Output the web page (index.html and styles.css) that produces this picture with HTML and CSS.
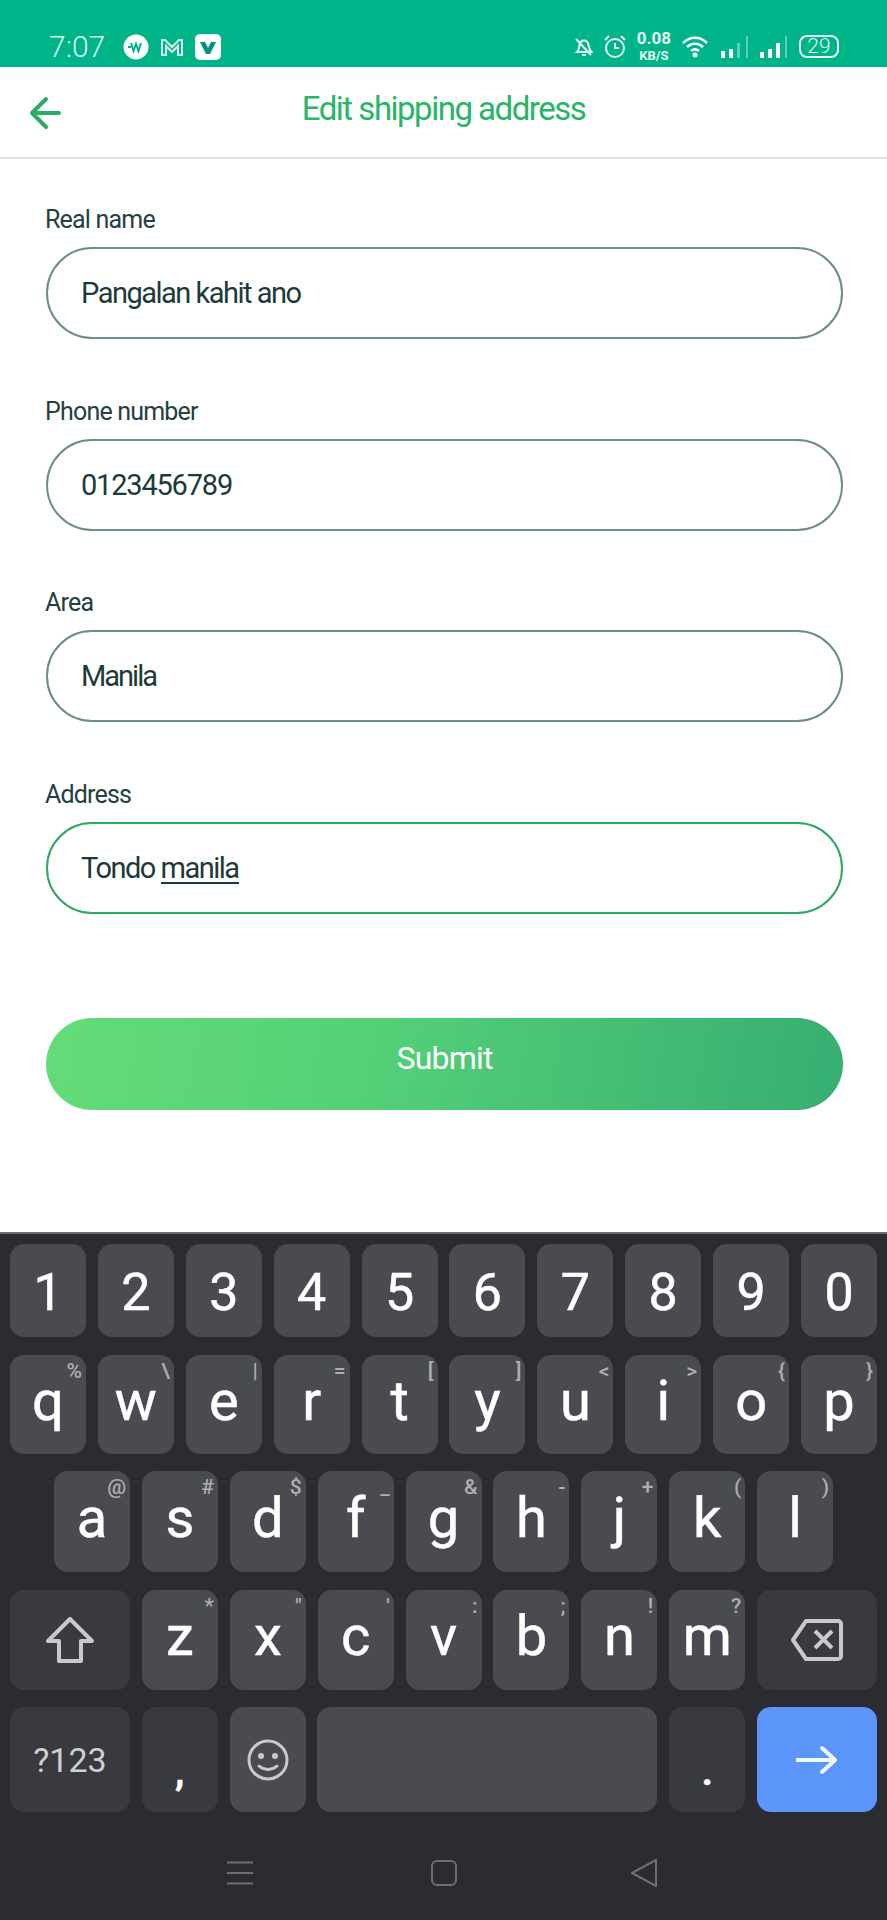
FILE: index.html
```html
<!DOCTYPE html>
<html lang="en">
<head>
    <meta charset="UTF-8">
    <meta name="viewport" content="width=device-width, initial-scale=1.0">
    <title>Edit shipping address</title>
    <link rel="stylesheet" href="styles.css">
</head>
<body>
    <div class="status-bar">
        <span class="clock">7:07</span>
        <svg class="app-icon" width="26" height="26" viewBox="0 0 26 26">
            <circle cx="13" cy="13" r="12.5" fill="#fff"/>
            <path d="M5 13h3M8 9l2.500 8 2.500-7 2.500 7 2.500-8" fill="none" stroke="#00b48a" stroke-width="2"/>
        </svg>
        <svg class="app-icon" width="24" height="20" viewBox="0 0 24 20">
            <path d="M2 18V3h3l7 7 7-7h3v15h-4V9l-6 6-6-6v9z" fill="none" stroke="#d6f3ec" stroke-width="2"/>
        </svg>
        <svg class="app-icon" width="26" height="26" viewBox="0 0 26 26">
            <rect width="26" height="26" rx="5" fill="#fff"/>
            <path d="M5 8h5l3 6 3-6h5l-6 12h-4z" fill="#00927a"/>
        </svg>
        <div class="status-right">
            <svg width="19" height="22" viewBox="0 0 19 22">
                <path d="M3 16c2-2 2-4 2.500-7C6 6 8 4.500 10 4.500S14 6 14.500 9c.5 3 1 5 3 7zM8 19h4M2 3l15 16" fill="none" stroke="#e4f7f2" stroke-width="2"/>
            </svg>
            <svg width="22" height="26" viewBox="0 0 22 26">
                <circle cx="11" cy="14" r="9" fill="none" stroke="#e4f7f2" stroke-width="2"/>
                <path d="M11 9v5h4M1 6l4-4M21 6l-4-4" fill="none" stroke="#e4f7f2" stroke-width="2"/>
            </svg>
            <div class="speed"><b>0.08</b><small>KB/S</small></div>
            <svg width="28" height="24" viewBox="0 0 28 24">
                <path d="M1 8c7-7 17-7 24 0M5 12c5-4.500 11-4.500 16 0M9 16c2.500-2 5.500-2 8 0" fill="none" stroke="#fff" stroke-width="2.500"/>
                <circle cx="13" cy="20" r="2.500" fill="#fff"/>
            </svg>
            <svg class="signal" width="28" height="24" viewBox="0 0 28 24">
                <rect x="0" y="16" width="4" height="7" fill="#fff"/>
                <rect x="8" y="14" width="4" height="9" fill="#fff"/>
                <rect x="16" y="8" width="3" height="15" fill="#5fd0b6"/>
                <rect x="25" y="1" width="2" height="22" fill="#5fd0b6"/>
            </svg>
            <svg class="signal" width="28" height="24" viewBox="0 0 28 24">
                <rect x="0" y="17" width="4" height="6" fill="#fff"/>
                <rect x="8" y="14" width="4" height="9" fill="#fff"/>
                <rect x="16" y="8" width="4" height="15" fill="#fff"/>
                <rect x="25" y="1" width="2" height="22" fill="#5fd0b6"/>
            </svg>
            <div class="battery">29</div>
        </div>
    </div>

    <header class="top-bar">
        <svg class="back-arrow" width="34" height="34" viewBox="0 0 34 34">
            <path d="M3 17h27M17 3L3 17l14 14" fill="none" stroke="#27ae60" stroke-width="4" stroke-linecap="round" stroke-linejoin="round"/>
        </svg>
        <h1>Edit shipping address</h1>
    </header>

    <main class="form">
        <div class="field">
            <label>Real name</label>
            <div class="input">Pangalan kahit ano</div>
        </div>
        <div class="field">
            <label>Phone number</label>
            <div class="input digits">0123456789</div>
        </div>
        <div class="field">
            <label>Area</label>
            <div class="input city">Manila</div>
        </div>
        <div class="field">
            <label>Address</label>
            <div class="input focused">Tondo <span class="composing">manila</span></div>
        </div>
        <button class="submit">Submit</button>
    </main>

    <section class="keyboard">
        <div class="row row-digits">
            <div class="key">1</div>
            <div class="key">2</div>
            <div class="key">3</div>
            <div class="key">4</div>
            <div class="key">5</div>
            <div class="key">6</div>
            <div class="key">7</div>
            <div class="key">8</div>
            <div class="key">9</div>
            <div class="key">0</div>
        </div>
        <div class="row row-top">
            <div class="key">q<span class="alt">%</span></div>
            <div class="key">w<span class="alt">\</span></div>
            <div class="key">e<span class="alt">|</span></div>
            <div class="key">r<span class="alt">=</span></div>
            <div class="key">t<span class="alt">[</span></div>
            <div class="key">y<span class="alt">]</span></div>
            <div class="key">u<span class="alt">&lt;</span></div>
            <div class="key">i<span class="alt">&gt;</span></div>
            <div class="key">o<span class="alt">{</span></div>
            <div class="key">p<span class="alt">}</span></div>
        </div>
        <div class="row row-home">
            <div class="key">a<span class="alt">@</span></div>
            <div class="key">s<span class="alt">#</span></div>
            <div class="key">d<span class="alt">$</span></div>
            <div class="key">f<span class="alt">_</span></div>
            <div class="key">g<span class="alt">&amp;</span></div>
            <div class="key">h<span class="alt">-</span></div>
            <div class="key">j<span class="alt">+</span></div>
            <div class="key">k<span class="alt">(</span></div>
            <div class="key">l<span class="alt">)</span></div>
        </div>
        <div class="row row-bottom">
            <div class="key wide dark">
                <svg width="48" height="46" viewBox="0 0 48 46">
                    <path d="M24 2L2 24h11v20h22V24h11z" fill="none" stroke="#c9c9c9" stroke-width="4" stroke-linejoin="round"/>
                </svg>
            </div>
            <div class="key">z<span class="alt">*</span></div>
            <div class="key">x<span class="alt">"</span></div>
            <div class="key">c<span class="alt">'</span></div>
            <div class="key">v<span class="alt">:</span></div>
            <div class="key">b<span class="alt">;</span></div>
            <div class="key">n<span class="alt">!</span></div>
            <div class="key">m<span class="alt">?</span></div>
            <div class="key wide dark">
                <svg width="52" height="42" viewBox="0 0 52 42">
                    <path d="M15 2h32a3 3 0 0 1 3 3v32a3 3 0 0 1-3 3H15L2 21zM24 12l17 17M41 12L24 29" fill="none" stroke="#c9c9c9" stroke-width="4" stroke-linejoin="round"/>
                </svg>
            </div>
        </div>
        <div class="row row-space">
            <div class="key wide dark symbols">?123</div>
            <div class="key dark punct">,</div>
            <div class="key">
                <svg width="42" height="42" viewBox="0 0 42 42">
                    <circle cx="21" cy="21" r="19" fill="none" stroke="#c9c9c9" stroke-width="3"/>
                    <circle cx="14" cy="17" r="3" fill="#c9c9c9"/>
                    <circle cx="28" cy="17" r="3" fill="#c9c9c9"/>
                    <path d="M12 27c5 4.500 13 4.500 18 0" fill="none" stroke="#c9c9c9" stroke-width="3" stroke-linecap="round"/>
                </svg>
            </div>
            <div class="key spacebar"></div>
            <div class="key dark punct">.</div>
            <div class="key wide enter">
                <svg width="42" height="30" viewBox="0 0 42 30">
                    <path d="M1 15h38M26 3l13 12-13 12" fill="none" stroke="#f2f6ff" stroke-width="4" stroke-linecap="round" stroke-linejoin="round"/>
                </svg>
            </div>
        </div>
        <nav class="nav-bar">
            <svg width="28" height="24" viewBox="0 0 28 24">
                <path d="M1 1.500h26M1 12h26M1 22.500h26" stroke="#6e6f73" stroke-width="2"/>
            </svg>
            <svg width="26" height="26" viewBox="0 0 26 26">
                <rect x="1" y="1" width="24" height="24" rx="5" fill="none" stroke="#6e6f73" stroke-width="2"/>
            </svg>
            <svg width="28" height="30" viewBox="0 0 28 30">
                <path d="M26 2v26L2 15z" fill="none" stroke="#6e6f73" stroke-width="2" stroke-linejoin="round"/>
            </svg>
        </nav>
    </section>
</body>
</html>
```

FILE: styles.css
```css
body {
    margin: 0;
    width: 887px;
    height: 1920px;
    overflow: hidden;
    display: flex;
    flex-direction: column;
    background-color: #fff;
    font-family: Roboto, "Liberation Sans", sans-serif;
}

/* status bar */
.status-bar {
    height: 67px;
    padding: 26px 48px 0 49px;
    box-sizing: border-box;
    display: flex;
    align-items: center;
    background-color: #00b48a;
}

.clock {
    width: 74px;
    font-size: 30px;
    font-weight: 300;
    color: #dcf5ee;
}

.app-icon {
    margin-right: 11px;
}

.status-right {
    margin-left: auto;
    display: flex;
    align-items: center;
    gap: 11px;
}

.speed {
    display: flex;
    flex-direction: column;
    align-items: center;
    margin-bottom: 2px;
    color: #e4f7f2;
}

.speed b {
    font-size: 17px;
    line-height: 20px;
}

.speed small {
    font-size: 13px;
    font-weight: 700;
    line-height: 15px;
}

.battery {
    width: 40px;
    height: 23px;
    box-sizing: border-box;
    border: 2.500px solid #e4f7f2;
    border-radius: 8px;
    color: #e4f7f2;
    font-size: 21px;
    font-weight: 300;
    line-height: 18px;
    text-align: center;
}

/* header */
.top-bar {
    height: 92px;
    box-sizing: border-box;
    border-bottom: 2px solid #e2e2e2;
    display: grid;
    grid-template-columns: 1fr auto 1fr;
    align-items: center;
}

.back-arrow {
    margin-left: 29px;
    margin-top: 2px;
}

.top-bar h1 {
    margin: 0 0 8px;
    font-size: 33px;
    font-weight: 400;
    letter-spacing: -1.500px;
    color: #27b566;
}

/* form */
.form {
    flex: 1;
    padding: 45px 44px 0 46px;
}

.field {
    margin-bottom: 56.600px;
}

.field label {
    display: block;
    height: 30px;
    margin-bottom: 13px;
    padding-top: 1px;
    margin-left: -1px;
    box-sizing: border-box;
    font-size: 25px;
    line-height: 30px;
    letter-spacing: -0.800px;
    color: #24403f;
}

.input {
    height: 92px;
    box-sizing: border-box;
    padding-left: 33px;
    border: 2px solid #6f8c8c;
    border-radius: 46px;
    font-size: 29px;
    line-height: 88px;
    letter-spacing: -1.500px;
    color: #1d3a3a;
}

.input.digits {
    letter-spacing: -1.200px;
}

.input.city {
    letter-spacing: -2px;
}

.input.focused {
    border-color: #2fa866;
}

.composing {
    display: inline-block;
    line-height: 28px;
    border-bottom: 2px solid #1d3a3a;
}

.field:last-of-type {
    margin-bottom: 104.500px;
}

.submit {
    display: block;
    width: 100%;
    height: 92px;
    padding-bottom: 14px;
    border: none;
    border-radius: 46px;
    background: linear-gradient(100deg, #64dc78 0%, #55d078 40%, #35ae72 100%);
    font-family: inherit;
    font-size: 32px;
    letter-spacing: -0.800px;
    color: #fff;
}

/* keyboard */
.keyboard {
    height: 688px;
    box-sizing: border-box;
    border-top: 2px solid #6b6c70;
    padding-top: 10px;
    display: flex;
    flex-direction: column;
    gap: 17.500px;
    background-color: #2b2c31;
}

.row {
    display: flex;
    gap: 11.900px;
    padding: 0 10px;
}

.row-digits { height: 93px; }
.row-top { height: 99px; }
.row-home { height: 101px; padding-left: 54px; }
.row-bottom { height: 100px; }
.row-space { height: 105px; gap: 11.800px; }

.key {
    position: relative;
    flex: 0 0 76px;
    display: flex;
    align-items: center;
    justify-content: center;
    padding-bottom: 7px;
    box-sizing: border-box;
    border-radius: 14px;
    background-color: #4a4b50;
    color: #fff;
    font-size: 56px;
    -webkit-text-stroke: 0.500px #fff;
    line-height: 1;
}

.row-digits .key {
    padding: 5px 0 0;
    font-size: 52px;
}

.alt {
    position: absolute;
    top: 3px;
    right: 4px;
    font-size: 21px;
    font-weight: 500;
    line-height: 26px;
    color: #aeaeb0;
    -webkit-text-stroke: 0;
}

.key svg {
    margin-top: 7px;
}

.key.wide {
    flex-basis: 120px;
}

.key.dark {
    background-color: #393a3f;
}

.key.symbols {
    padding: 0;
    font-size: 34px;
    color: #cfcfcf;
    -webkit-text-stroke: 0;
}

.key.punct {
    align-items: flex-end;
    padding-bottom: 21px;
    font-size: 38px;
    font-weight: 700;
}

.spacebar {
    flex-basis: 340px;
}

.key.enter {
    background-color: #5c96fb;
}

.nav-bar {
    margin-top: 28px;
    padding-left: 226px;
    display: grid;
    grid-template-columns: 205px 199px 28px;
    align-items: center;
}
```
